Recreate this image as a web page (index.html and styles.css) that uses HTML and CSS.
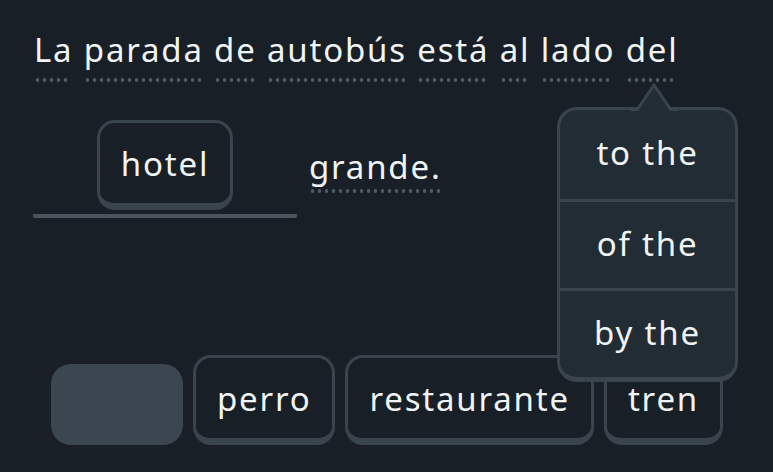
FILE: index.html
```html
<!DOCTYPE html>
<html lang="es">
<head>
  <meta charset="UTF-8" />
  <title>Completa la frase</title>
  <link rel="stylesheet" href="styles.css">
</head>
<body>
  <div class="page">
    <p class="prompt">
      <span class="word">La</span> <span class="word">parada</span> <span class="word">de</span> <span class="word">autobús</span> <span class="word">está</span> <span class="word">al</span> <span class="word">lado</span> <span class="word">del</span>
    </p>

    <div class="answer-row">
      <div class="blank">
        <button class="chip">hotel</button>
      </div>
      <span class="word">grande.</span>
    </div>

    <div class="bank">
      <div class="chip chip-empty"></div>
      <button class="chip">perro</button>
      <button class="chip">restaurante</button>
      <button class="chip">tren</button>
    </div>
  </div>

  <div class="hint">
    <svg class="hint-arrow" width="48" height="28" viewBox="0 0 48 28">
      <path d="M0 27 L7 27 L24 2 L41 27 L48 27" fill="#222c34" stroke="#3a444d" stroke-width="3" stroke-linejoin="round" />
    </svg>
    <div class="hint-row">to the</div>
    <div class="hint-row">of the</div>
    <div class="hint-row">by the</div>
  </div>
</body>
</html>
```

FILE: styles.css
```css
body {
  margin: 0;
  background-color: #181f26;
  color: #f1f4f5;
  font-family: "Noto Sans", Arial, sans-serif;
  font-size: 33px;
  letter-spacing: 1.8px;
  height: 472px;
  overflow: hidden;
  position: relative;
}
.page {
  padding: 28px 0 0 34px;
}
.prompt {
  margin: 0;
  line-height: 44px;
}
.word {
  display: inline-block;
  position: relative;
  padding-bottom: 10px;
}
.word::after {
  content: "";
  position: absolute;
  left: 0;
  right: 2px;
  bottom: 0;
  height: 4px;
  background: radial-gradient(circle, #4f5a63 1.6px, transparent 2.1px) left center / 7px 4px repeat-x;
}
.answer-row {
  display: flex;
  align-items: flex-start;
  margin-top: 38px;
  margin-left: -1px;
}
.blank {
  width: 264px;
  display: flex;
  justify-content: center;
  padding-bottom: 4px;
  border-bottom: 4px solid #4a545d;
  border-radius: 2px;
}
.answer-row .word {
  margin-left: 12px;
  margin-top: 27px;
  line-height: 40px;
  padding-bottom: 6px;
}
.chip {
  font: inherit;
  letter-spacing: inherit;
  color: inherit;
  background: #181f26;
  border: 3px solid #3a444d;
  border-bottom-width: 7px;
  border-radius: 18px;
  height: 90px;
  padding: 0 21px;
  box-sizing: border-box;
}
.bank {
  display: flex;
  align-items: flex-end;
  gap: 10px;
  margin-top: 137px;
  margin-left: 17px;
}
.chip-empty {
  width: 132px;
  height: 81px;
  background: #3c4650;
  border: none;
  border-radius: 20px;
}
.hint {
  position: absolute;
  left: 557px;
  top: 107px;
  width: 181px;
  background: #222c34;
  border: 3px solid #3a444d;
  border-bottom-width: 5px;
  border-radius: 20px;
  box-sizing: border-box;
}
.hint-arrow {
  position: absolute;
  left: 70px;
  top: -27px;
}
.hint-row {
  height: 89px;
  display: flex;
  align-items: center;
  justify-content: center;
  padding-bottom: 4px;
  box-sizing: border-box;
}
.hint-row + .hint-row {
  border-top: 3px solid #3a444d;
}
```
